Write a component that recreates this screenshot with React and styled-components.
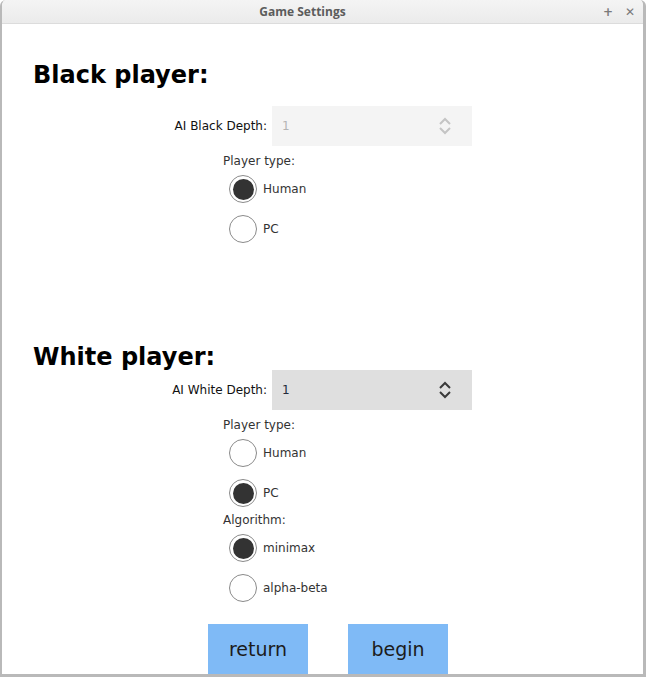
import React from "react";
import styled, { createGlobalStyle } from "styled-components";

const GlobalStyle = createGlobalStyle`
  html, body {
    margin: 0;
    padding: 0;
    background: #ffffff;
  }
  * {
    box-sizing: border-box;
  }
`;

function Chevrons({ color }) {
  return (
    <svg width="14" height="20" viewBox="0 0 14 20" fill="none">
      <path d="M2 8 L7 3 L12 8" stroke={color} strokeWidth="2" />
      <path d="M2 12 L7 17 L12 12" stroke={color} strokeWidth="2" />
    </svg>
  );
}

function Radio({ checked, label }) {
  return (
    <RadioRow>
      <RadioCircle>{checked && <RadioDot />}</RadioCircle>
      <RadioLabel>{label}</RadioLabel>
    </RadioRow>
  );
}

function SpinRow({ label, disabled, top }) {
  return (
    <FormRow $top={top}>
      <FieldLabel>{label}</FieldLabel>
      <SpinBox disabled={disabled}>
        <SpinValue disabled={disabled}>1</SpinValue>
        <Chevrons color={disabled ? "#c4c4c4" : "#3a3a3a"} />
      </SpinBox>
    </FormRow>
  );
}

export default function App() {
  return (
    <>
      <GlobalStyle />
      <Window>
        <TitleBar>
          <Title>Game Settings</Title>
          <TitleButtons>
            <span>+</span>
            <span>✕</span>
          </TitleButtons>
        </TitleBar>
        <Content>
          <Heading $top={37}>Black player:</Heading>
          <SpinRow label="AI Black Depth:" disabled top={18} />
          <Group>
            <GroupLabel>Player type:</GroupLabel>
            <Radio checked label="Human" />
            <Radio label="PC" />
          </Group>

          <Heading $top={100}>White player:</Heading>
          <SpinRow label="AI White Depth:" top={0} />
          <Group>
            <GroupLabel>Player type:</GroupLabel>
            <Radio label="Human" />
            <Radio checked label="PC" />
            <GroupLabel>Algorithm:</GroupLabel>
            <Radio checked label="minimax" />
            <Radio label="alpha-beta" />
          </Group>

          <Buttons>
            <Button>return</Button>
            <Button>begin</Button>
          </Buttons>
        </Content>
      </Window>
    </>
  );
}

const Window = styled.div`
  width: 646px;
  height: 677px;
  display: flex;
  flex-direction: column;
  border-left: 2px solid #b9b9b9;
  border-right: 3px solid #b9b9b9;
  border-bottom: 3px solid #b9b9b9;
  border-radius: 6px 6px 0 0;
  overflow: hidden;
  background: #ffffff;
  font-family: "DejaVu Sans", sans-serif;
  color: #1e1e1e;
`;

const TitleBar = styled.div`
  height: 24px;
  flex: none;
  position: relative;
  display: flex;
  align-items: center;
  justify-content: center;
  padding-right: 40px;
  background: linear-gradient(#f4f4f4, #ebebeb);
  border-bottom: 1px solid #dcdcdc;
`;

const Title = styled.div`
  font-family: "Open Sans", "Noto Sans", sans-serif;
  font-weight: 700;
  font-size: 12px;
  color: #5c5c5c;
`;

const TitleButtons = styled.div`
  position: absolute;
  right: 8px;
  top: 0;
  height: 24px;
  display: flex;
  align-items: center;
  gap: 12px;
  font-family: "DejaVu Sans", sans-serif;
  font-size: 12px;
  font-weight: 700;
  color: #7a7a7a;
`;

const Content = styled.div`
  flex: 1;
  display: flex;
  flex-direction: column;
`;

const Heading = styled.h1`
  margin: ${(p) => p.$top}px 0 -1px 31px;
  font-size: 24px;
  line-height: 28px;
  font-weight: 700;
  color: #000;
`;

const FormRow = styled.div`
  display: flex;
  align-items: center;
  margin-top: ${(p) => p.$top}px;
  padding-left: 97px;
  gap: 5px;
`;

const FieldLabel = styled.div`
  width: 168px;
  text-align: right;
  font-size: 12px;
  color: #111;
`;

const SpinBox = styled.div`
  width: 200px;
  height: 40px;
  display: flex;
  align-items: center;
  justify-content: space-between;
  padding: 0 20px 0 10px;
  background: ${(p) => (p.disabled ? "#f4f4f4" : "#dfdfdf")};
`;

const SpinValue = styled.span`
  font-size: 12px;
  color: ${(p) => (p.disabled ? "#b4b4b4" : "#232a3a")};
`;

const Group = styled.div`
  display: flex;
  flex-direction: column;
  padding-left: 221px;
  margin-top: 7px;
`;

const GroupLabel = styled.div`
  font-size: 12px;
  line-height: 16px;
  color: #333;
  &:not(:first-child) {
    margin-top: 5px;
  }
`;

const RadioRow = styled.div`
  display: flex;
  align-items: center;
  height: 28px;
  padding-left: 6px;
  gap: 6px;
  margin-top: 12px;
  ${GroupLabel} + & {
    margin-top: 6px;
  }
`;

const RadioCircle = styled.div`
  width: 28px;
  height: 28px;
  border-radius: 50%;
  border: 1px solid #8a8a8a;
  background: #fff;
  display: flex;
  align-items: center;
  justify-content: center;
`;

const RadioDot = styled.div`
  width: 21px;
  height: 21px;
  border-radius: 50%;
  background: #333333;
`;

const RadioLabel = styled.span`
  font-size: 12px;
  color: #333;
`;

const Buttons = styled.div`
  display: flex;
  gap: 40px;
  padding-left: 206px;
  margin-top: 22px;
`;

const Button = styled.div`
  width: 100px;
  height: 50px;
  display: flex;
  align-items: center;
  justify-content: center;
  background: #7fbaf6;
  font-size: 19px;
  color: #1c1c1c;
`;
